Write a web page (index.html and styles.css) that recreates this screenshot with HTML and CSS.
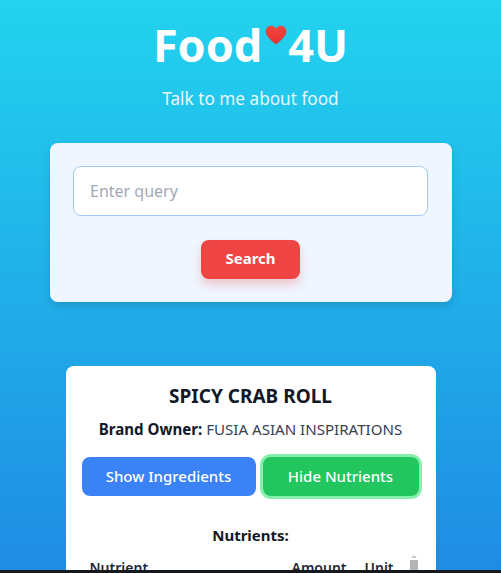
FILE: index.html
```html
<!DOCTYPE html>
<html lang="en">
<head>
<meta charset="utf-8">
<title>Food4U</title>
<link rel="stylesheet" href="styles.css">
</head>
<body>
<main class="page">
  <header class="hero">
    <h1 class="title">Food<svg class="heart" viewBox="0 0 22 20" aria-hidden="true"><defs><linearGradient id="hg" x1="0" y1="0" x2="0" y2="1"><stop offset="0" stop-color="#f8453f"/><stop offset="1" stop-color="#e8312f"/></linearGradient></defs><path d="M11 19.2C8.400 16.900 1 11.800 1 6.400 1 3 3.500 1 6.100 1 8.200 1 10 2.200 11 4.200 12 2.200 13.800 1 15.900 1 18.500 1 21 3 21 6.400 21 11.800 13.600 16.900 11 19.200Z" fill="url(#hg)" stroke="#c9463f" stroke-width=".6"/></svg>4U</h1>
    <p class="tagline">Talk to me about food</p>
  </header>
  <section class="search-card">
    <input class="query" type="text" placeholder="Enter query">
    <button class="search-btn" type="button">Search</button>
  </section>
  <section class="result-card">
    <h2 class="food-name">SPICY CRAB ROLL</h2>
    <p class="brand"><strong>Brand Owner:</strong> FUSIA ASIAN INSPIRATIONS</p>
    <div class="actions">
      <button class="action blue" type="button">Show Ingredients</button>
      <button class="action green" type="button">Hide Nutrients</button>
    </div>
    <h3 class="nutrients-title">Nutrients:</h3>
    <div class="table-wrap">
      <div class="table-head">
        <span class="col-name">Nutrient</span>
        <span class="col-amount">Amount</span>
        <span class="col-unit">Unit</span>
      </div>
      <div class="scrollbar"><i class="arrow"></i><i class="thumb"></i></div>
    </div>
  </section>
</main>
<div class="bottom-bar"></div>
</body>
</html>
```
FILE: styles.css
```css
* { box-sizing: border-box; }
html, body { margin: 0; height: 100%; }
body {
  height: 573px;
  overflow: hidden;
  display: flex;
  flex-direction: column;
  font-family: "Noto Sans", "Open Sans", sans-serif;
  background: #fff;
}
.page {
  flex: 1;
  min-height: 0;
  overflow: hidden;
  display: flex;
  flex-direction: column;
  align-items: center;
  background: linear-gradient(180deg, #22d3ee 0%, #1f8ce4 100%);
}
.hero { flex: none; text-align: center; padding-top: 13px; }
.title {
  margin: 0;
  height: 64px;
  font-size: 45px;
  line-height: 64px;
  font-weight: 700;
  color: #fff;
  display: flex;
  align-items: center;
  justify-content: center;
}
.heart { width: 22px; height: 20px; margin: -20px 1px 0 3px; }
.tagline {
  margin: 10px 0 0;
  font-size: 17.2px;
  line-height: 24px;
  color: #e6f9fe;
}
.search-card {
  flex: none;
  width: 402px;
  height: 159px;
  margin-top: 32px;
  padding: 23px 23px 0;
  background: #eff6ff;
  border-radius: 8px;
  box-shadow: 0 4px 8px rgba(0, 0, 0, .12);
  display: flex;
  flex-direction: column;
  align-items: center;
}
.query {
  flex: none;
  width: 355px;
  height: 50px;
  padding: 0 16px;
  border: 1px solid #a3c9f3;
  border-radius: 8px;
  background: #fff;
  font: 16px "Noto Sans", sans-serif;
  outline: none;
}
.query::placeholder { color: #a3a9b4; opacity: 1; }
.search-btn {
  flex: none;
  width: 99px;
  height: 39px;
  margin-top: 24px;
  padding: 0 0 3px;
  border: 0;
  border-radius: 8px;
  background: #ef4444;
  color: #fff;
  font: 700 15px "Noto Sans", sans-serif;
  box-shadow: 0 6px 10px rgba(239, 68, 68, .25);
}
.result-card {
  flex: none;
  width: 370px;
  margin-top: 64px;
  padding: 16px 16px 40px;
  background: #fff;
  border-radius: 8px 8px 0 0;
  color: #111827;
}
.food-name {
  margin: 0;
  font-size: 19px;
  line-height: 28px;
  font-weight: 700;
  text-align: center;
}
.brand {
  margin: 7px 0 0;
  font-size: 15.100px;
  line-height: 24px;
  text-align: center;
  color: #374151;
  white-space: nowrap;
}
.brand strong { color: #111827; font-weight: 700; }
.actions {
  display: flex;
  gap: 7px;
  margin-top: 16px;
}
.action {
  height: 39px;
  padding: 0 0 2px;
  border: 0;
  border-radius: 8px;
  color: #fff;
  font: 500 15px "Noto Sans", sans-serif;
}
.blue { width: 174px; background: #3b82f6; }
.green {
  width: 156px;
  background: #22c55e;
  box-shadow: 0 0 0 3px #86efac;
}
.nutrients-title {
  margin: 27px 0 0;
  font-size: 15px;
  line-height: 24px;
  font-weight: 700;
  text-align: center;
}
.table-wrap {
  position: relative;
  margin-top: 11px;
  height: 40px;
  font-size: 14px;
  font-weight: 600;
  color: #1f2937;
}
.table-head { display: flex; padding: 0 8px; line-height: 20px; }
.col-name { width: 202px; }
.col-amount { width: 73px; }
.scrollbar { position: absolute; left: 328px; top: -3px; width: 8px; }
.arrow {
  display: block;
  width: 0;
  margin: 0 auto 2px;
  border: 3px solid transparent;
  border-top: 0;
  border-bottom: 3px solid #c4c4c4;
}
.thumb { display: block; width: 8px; height: 20px; background: #b4b4b4; }
.bottom-bar { flex: none; height: 3px; background: #15181c; }
```
